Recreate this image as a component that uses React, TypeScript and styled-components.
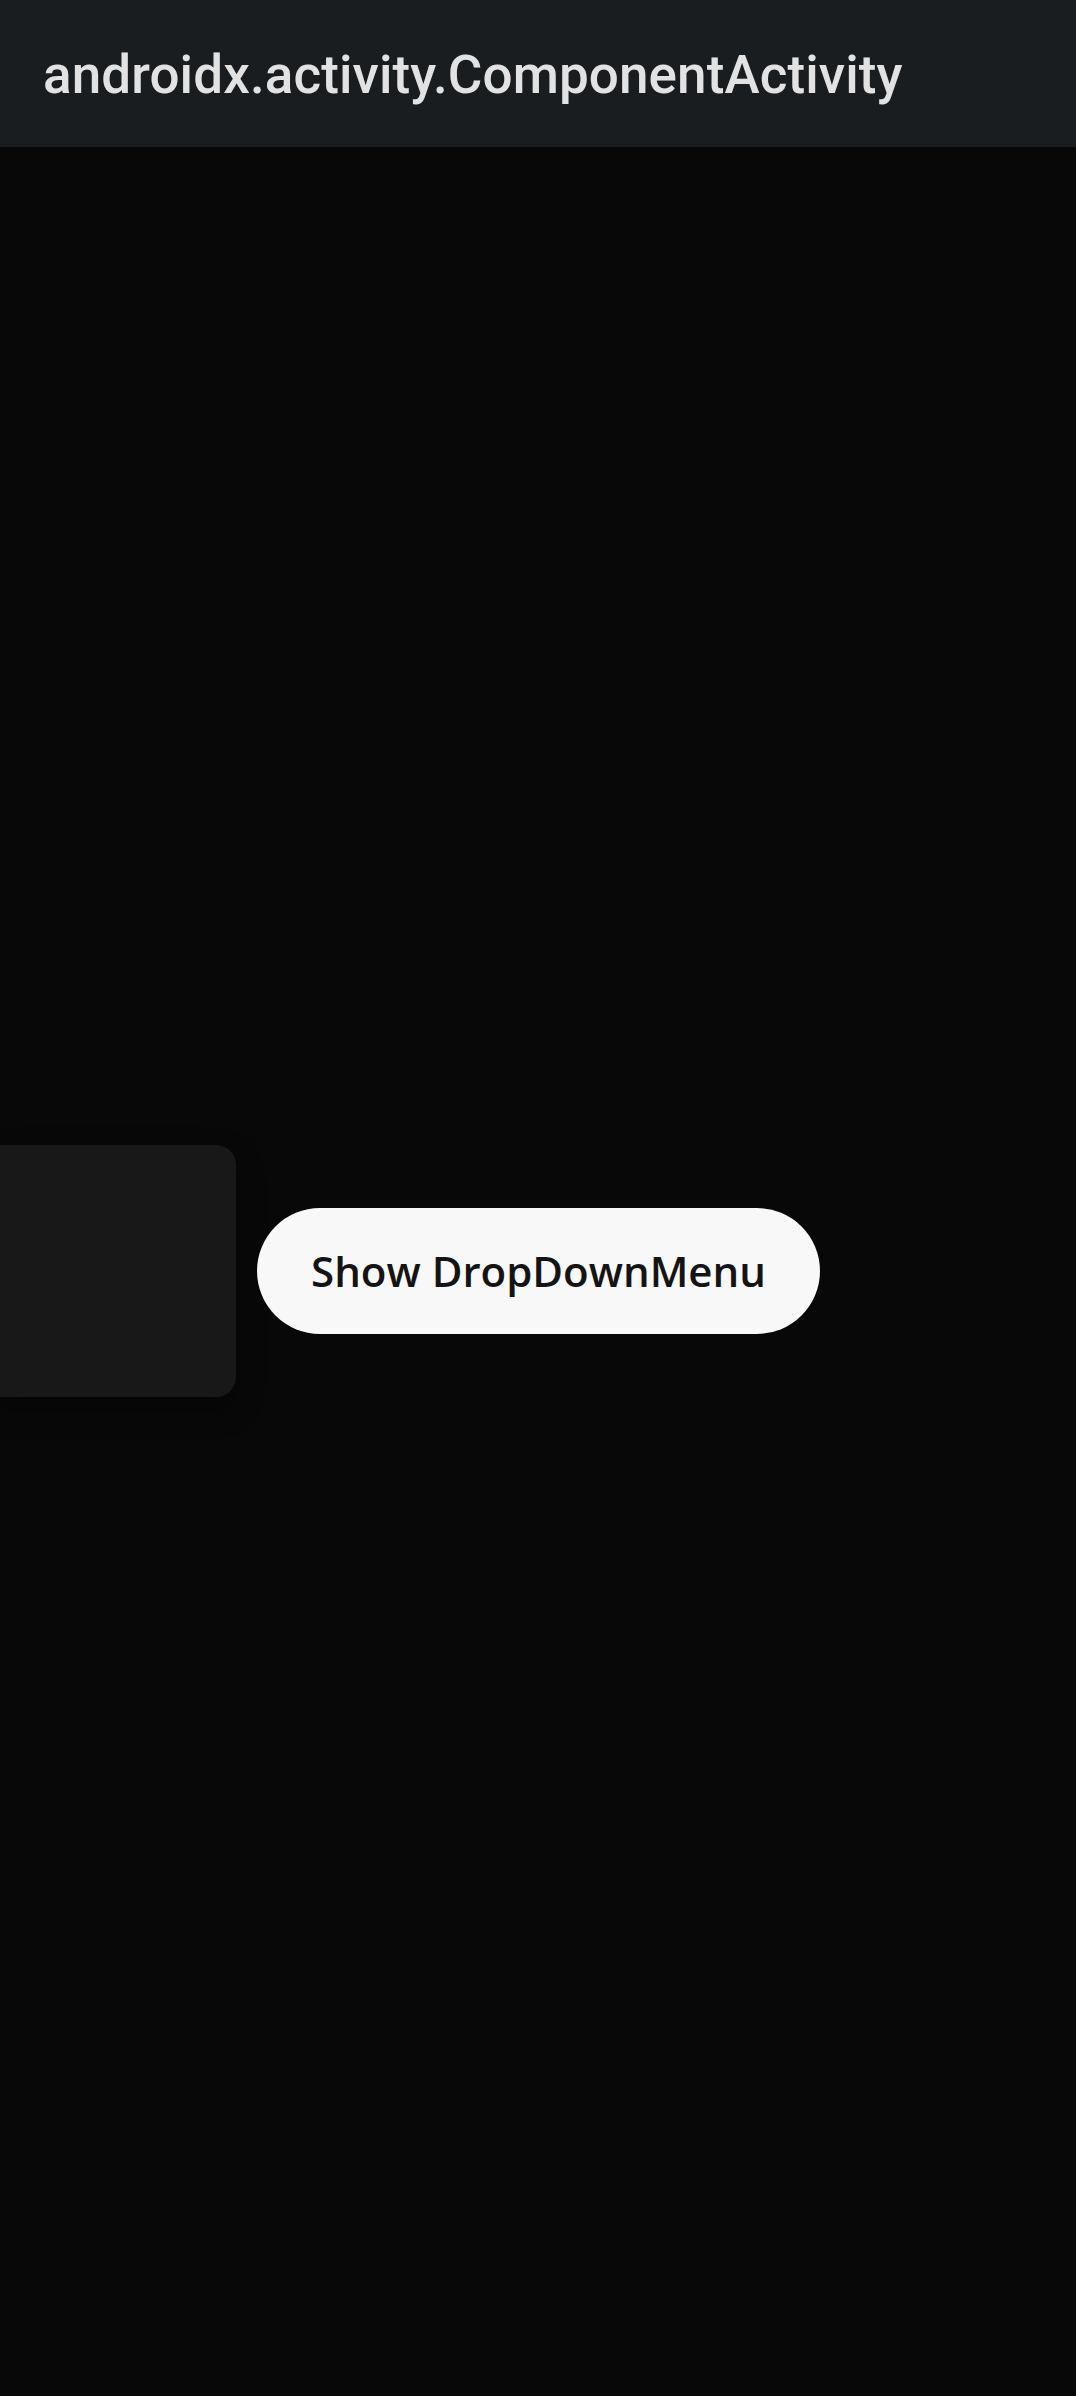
import React from "react";
import styled, { createGlobalStyle } from "styled-components";

const Global = createGlobalStyle`
  html, body { margin: 0; padding: 0; background: #080808; }
  #root { min-height: 100vh; }
`;

const Screen = styled.div`
  width: 1076px;
  height: 2396px;
  display: flex;
  flex-direction: column;
  background: #080808;
  overflow: hidden;
`;

const TopBar = styled.header`
  height: 147px;
  flex: none;
  display: flex;
  align-items: center;
  padding-left: 43px;
  background: #1a1d20;
  box-sizing: border-box;
`;

const Title = styled.h1`
  margin: 0;
  font-family: Roboto, "Liberation Sans", sans-serif;
  font-weight: 500;
  font-size: 53px;
  color: #e2e2e2;
  letter-spacing: 0.1px;
  padding-top: 3px;
`;

const Content = styled.main`
  flex: 1;
  display: flex;
  align-items: center;
  padding-bottom: 2px;
`;

const Row = styled.div`
  display: flex;
  align-items: center;
  gap: 21px;
`;

const MenuPanel = styled.div`
  width: 236px;
  height: 252px;
  background: #181818;
  border-radius: 0 20px 20px 0;
  box-shadow: 0 12px 28px rgba(0, 0, 0, 0.35);
`;

const PillButton = styled.button`
  width: 563px;
  height: 126px;
  border: none;
  border-radius: 63px;
  background: #f8f8f8;
  color: #141414;
  font-family: "Open Sans", "Noto Sans", sans-serif;
  font-weight: 600;
  font-size: 42px;
  display: flex;
  align-items: center;
  justify-content: center;
  padding: 0;
  cursor: pointer;
`;

export default function App() {
  return (
    <>
      <Global />
      <Screen>
        <TopBar>
          <Title>androidx.activity.ComponentActivity</Title>
        </TopBar>
        <Content>
          <Row>
            <MenuPanel />
            <PillButton>Show DropDownMenu</PillButton>
          </Row>
        </Content>
      </Screen>
    </>
  );
}
